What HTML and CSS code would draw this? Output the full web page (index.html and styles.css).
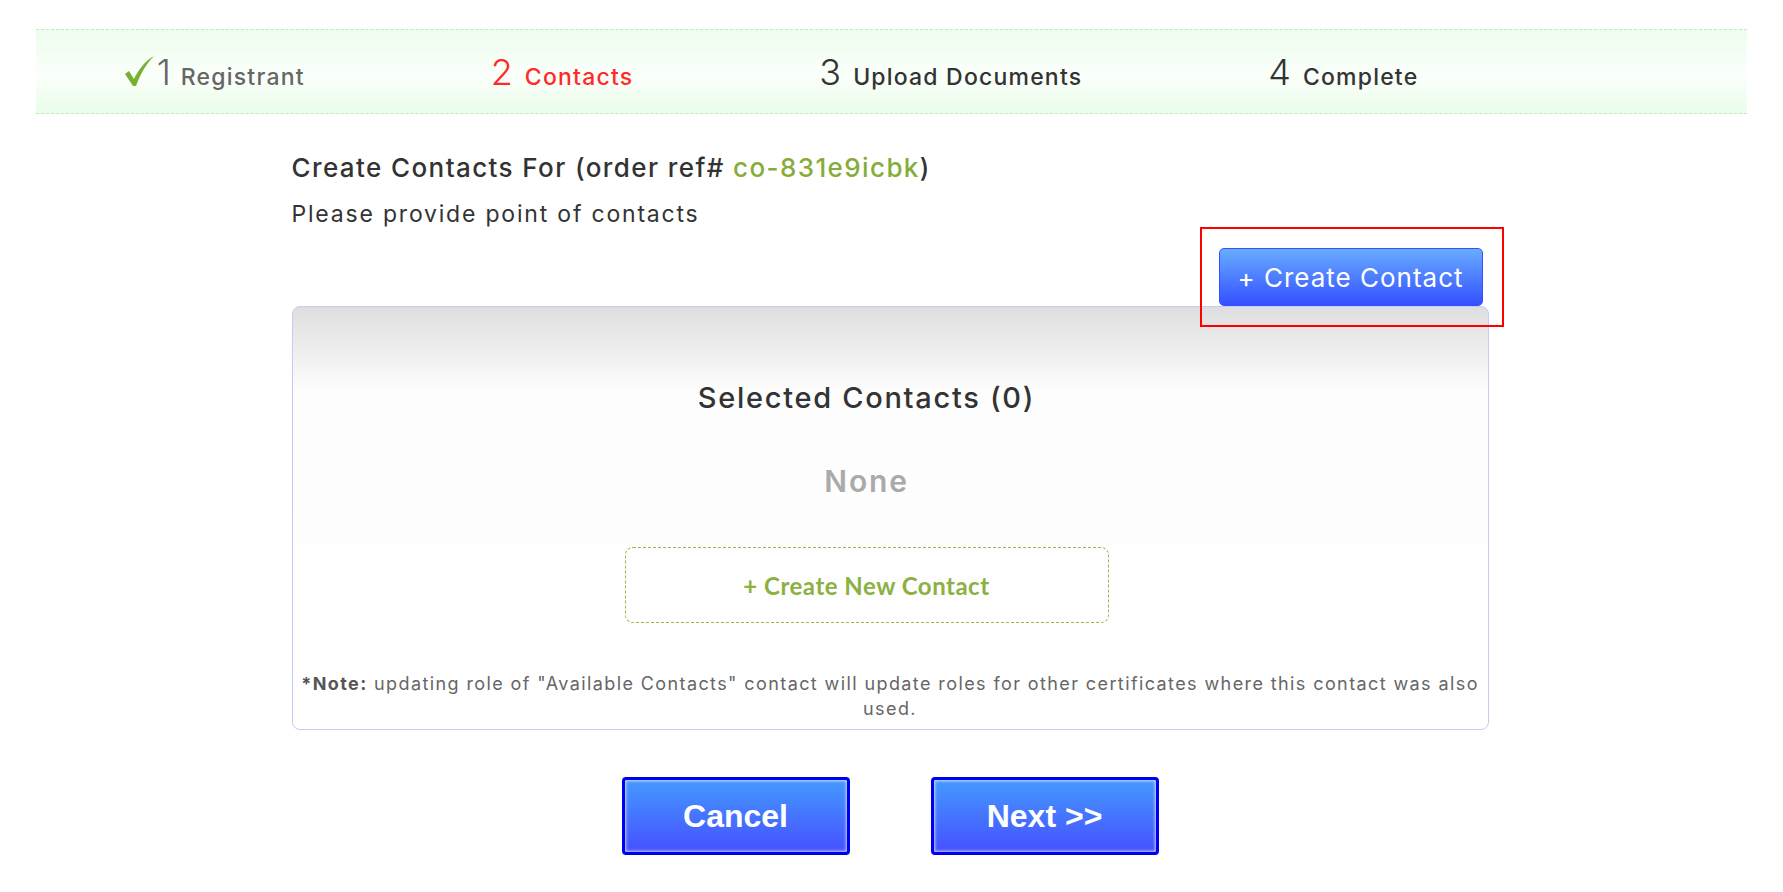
FILE: index.html
```html
<!DOCTYPE html>
<html lang="en">
<head>
    <meta charset="UTF-8">
    <meta name="viewport" content="width=device-width, initial-scale=1.0">
    <title>Create Contacts</title>
    <link rel="stylesheet" href="styles.css">
</head>
<body>
    <div class="steps">
        <div class="step done">
            <svg class="check" width="30" height="31" viewBox="0 0 30 31">
                <path d="M0 18 L4 15 L9 23 C14 13 20 5 29 0 C22 7 16 16 11 30 L8 30 Z" fill="#77b032"/>
            </svg>
            <span class="step-num">1</span>
            <span class="step-label">Registrant</span>
        </div>
        <div class="step active">
            <span class="step-num">2</span>
            <span class="step-label">Contacts</span>
        </div>
        <div class="step">
            <span class="step-num">3</span>
            <span class="step-label">Upload Documents</span>
        </div>
        <div class="step">
            <span class="step-num">4</span>
            <span class="step-label">Complete</span>
        </div>
    </div>

    <div class="container">
        <h2 class="title">Create Contacts For (order ref# <span class="ref">co-831e9icbk</span>)</h2>
        <p class="subtitle">Please provide point of contacts</p>

        <div class="action-row">
            <div class="highlight">
                <button class="btn-create">+ Create Contact</button>
            </div>
        </div>

        <div class="contacts-box">
            <div class="contacts-inner">
                <h3 class="contacts-title">Selected Contacts (0)</h3>
                <div class="none">None</div>
                <div class="new-contact">+ Create New Contact</div>
            </div>
            <p class="note"><b>*Note:</b> updating role of "Available Contacts" contact will update roles for other certificates where this contact was also<br>used.</p>
        </div>

        <div class="button-group">
            <button class="btn-big">Cancel</button>
            <button class="btn-big">Next &gt;&gt;</button>
        </div>
    </div>
</body>
</html>
```

FILE: styles.css
```css
body {
    font-family: 'Inter', 'Open Sans', sans-serif;
    background-color: #fff;
    color: #333;
    margin: 0;
    padding: 0;
    letter-spacing: 0.06em;
}
.steps {
    width: 96%;
    height: 85px;
    box-sizing: border-box;
    margin: 29px auto 0;
    border-top: 1px dashed #b8f0b8;
    border-bottom: 1px dashed #b8f0b8;
    background: linear-gradient(#edfded, #fbfffb 55%, #eafdea);
    display: flex;
    align-items: center;
    gap: 186px;
    padding-left: 89px;
}
.step {
    display: flex;
    align-items: baseline;
    color: #333;
}
.step .check {
    align-self: center;
    margin-right: 2px;
}
.step-num {
    font-size: 36px;
    font-weight: 300;
    letter-spacing: 0;
}
.step-label {
    font-size: 23px;
    font-weight: 500;
    margin-left: 12px;
    letter-spacing: 1.2px;
}
.step.done {
    color: #666;
}
.step.done .step-label {
    margin-left: 10px;
}
.step.active {
    color: #ff2a2a;
}
.container {
    width: 1200px;
    margin: 0 auto;
}
.title {
    font-size: 26px;
    font-weight: 500;
    line-height: 30px;
    margin: 39px 0 16px;
    color: #333;
    letter-spacing: 1.4px;
}
.ref {
    color: #86ac3a;
}
.subtitle {
    font-size: 23px;
    line-height: 30px;
    margin: 0;
    color: #333;
    letter-spacing: 1.8px;
}
.action-row {
    display: flex;
    justify-content: flex-end;
    margin-top: 19px;
    padding-right: 9px;
}
.highlight {
    position: relative;
}
/* red annotation frame around the button */
.highlight::after {
    content: "";
    position: absolute;
    left: -19px;
    right: -21px;
    top: -21px;
    bottom: -21px;
    border: 2px solid #f00;
}
.btn-create {
    display: block;
    width: 264px;
    height: 58px;
    font-family: 'Inter', sans-serif;
    font-size: 26px;
    letter-spacing: 1px;
    color: #fff;
    background: linear-gradient(#68acff, #3350ff);
    border: 1px solid #3350ff;
    border-radius: 5px;
    cursor: pointer;
}
.contacts-box {
    width: 1197px;
    box-sizing: border-box;
    border: 1px solid #c8c8fa;
    border-radius: 8px;
    background: linear-gradient(#dedede, #fdfdfd 85px, #fff);
    padding: 0 6px 8px;
}
.contacts-inner {
    display: flex;
    flex-direction: column;
    align-items: center;
    padding-top: 74px;
    padding-right: 47px;
}
.contacts-title {
    font-size: 29px;
    font-weight: 500;
    line-height: 34px;
    margin: 0;
    color: #333;
    letter-spacing: 1.7px;
}
.none {
    font-size: 30px;
    font-weight: 600;
    line-height: 38px;
    color: #aaa;
    margin-top: 47px;
    letter-spacing: 1.8px;
}
.new-contact {
    width: 484px;
    height: 76px;
    box-sizing: border-box;
    margin-top: 47px;
    border: 1px dashed #9ab84a;
    border-radius: 8px;
    display: flex;
    align-items: center;
    justify-content: center;
    font-family: 'Lato', sans-serif;
    font-weight: 700;
    font-size: 24px;
    letter-spacing: 0.5px;
    color: #8cb043;
    cursor: pointer;
}
.note {
    margin: 48px 0 0;
    font-size: 18px;
    line-height: 25px;
    color: #666;
    text-align: center;
    letter-spacing: 1.4px;
}
.note b {
    color: #555;
}
.button-group {
    display: flex;
    justify-content: center;
    gap: 81px;
    margin-top: 47px;
    padding-right: 3px;
}
.btn-big {
    width: 228px;
    height: 78px;
    font-family: 'Liberation Sans', Arial, sans-serif;
    font-weight: bold;
    font-size: 32px;
    letter-spacing: 0;
    color: #fff;
    background: linear-gradient(#4499ff, #4650ff);
    border: 3px solid #0000f0;
    border-radius: 4px;
    box-shadow: inset 0 0 3px 1px rgba(255, 255, 255, 0.7);
    cursor: pointer;
}
```
